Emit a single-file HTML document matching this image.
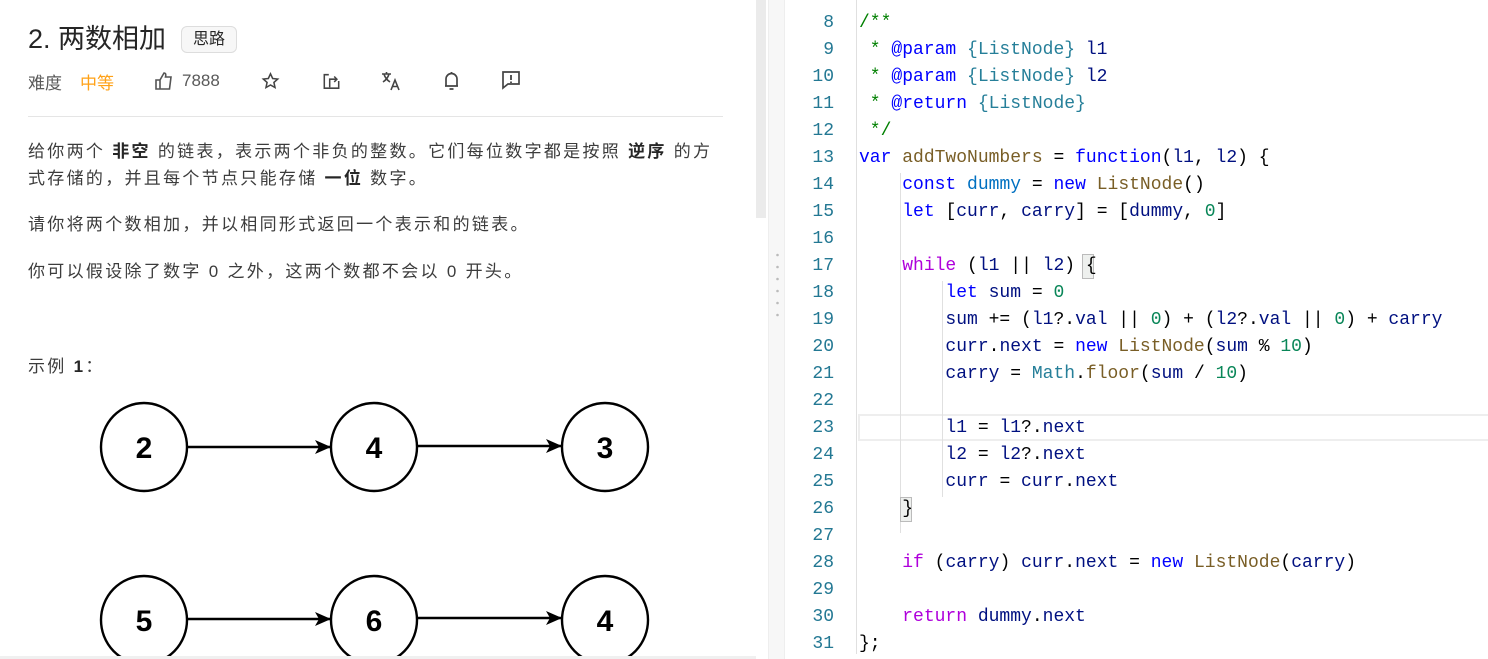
<!DOCTYPE html>
<html><head><meta charset="utf-8"><style>
*{margin:0;padding:0;box-sizing:border-box}
body{width:1488px;height:659px;overflow:hidden;background:#fff;position:relative;font-family:"Liberation Sans","Noto Sans CJK SC",sans-serif;color:#262626}
.abs{position:absolute}
.p{position:absolute;left:28px;font-size:17px;letter-spacing:2.3px;color:#3c3c3c;white-space:nowrap;line-height:27px}
.p b{color:#262626}
.code{position:absolute;left:859px;font-family:"Liberation Mono",monospace;font-size:18px;line-height:27px;white-space:pre;color:#001080}
.ln{position:absolute;right:654px;font-family:"Liberation Mono",monospace;font-size:18px;line-height:27px;color:#237893;text-align:right}
.k{color:#0000ff}.c{color:#af00db}.f{color:#795e26}.n{color:#098658}.cm{color:#008000}.t{color:#267f99}.o{color:#000}
</style></head><body>
<div class="abs" style="left:28px;top:17px;font-size:27px;color:#262626;white-space:nowrap">2. 两数相加</div>
<div class="abs" style="left:181px;top:26px;width:56px;height:27px;border:1px solid #ddd;border-radius:6px;background:#f7f7f7;font-size:16px;line-height:25px;text-align:center;color:#262626">思路</div>
<div class="abs" style="left:28px;top:69px;font-size:17px;color:#595959">难度</div>
<div class="abs" style="left:80px;top:69px;font-size:17px;color:#ffa116">中等</div>
<svg class="abs" style="left:154px;top:71px" width="20" height="20" viewBox="0 0 20 20" fill="none" stroke="#555" stroke-width="1.6"><path d="M2 9h4v9H2zM6 9l4-7c2 0 2 2 1.5 4H17l-1.5 12H6"/></svg>
<div class="abs" style="left:182px;top:71px;font-size:17px;color:#595959">7888</div>
<svg class="abs" style="left:261px;top:72px" width="19" height="18" viewBox="0 0 20 20" fill="none" stroke="#444" stroke-width="1.7"><path d="M10 2l2.4 5.2 5.6.6-4.2 3.8 1.2 5.6L10 14.4 5 17.2l1.2-5.6L2 7.8l5.6-.6z"/></svg>
<svg class="abs" style="left:322px;top:72px" width="19" height="18" viewBox="0 0 20 20" fill="none" stroke="#444" stroke-width="1.7"><path d="M7 3H2v15h16v-8M8 17V8h8M13 5l3 3-3 3"/></svg>
<svg class="abs" style="left:381px;top:71px" width="20" height="20" viewBox="0 0 20 20" fill="none" stroke="#444" stroke-width="1.6"><path d="M1 3h9M5.5 1v2M3 3c1 4 3 6 6 8M8 3c-1 4-3 6-6 8M10 19l4-10 4 10M11.5 15.5h5"/></svg>
<svg class="abs" style="left:443px;top:71px" width="17" height="20" viewBox="0 0 17 20" fill="none" stroke="#444" stroke-width="1.7"><path d="M3 15V8a5.5 5.5 0 0111 0v7H2h13M8.5 1v1.5M6.5 18h4"/></svg>
<svg class="abs" style="left:502px;top:71px" width="18" height="19" viewBox="0 0 18 19" fill="none" stroke="#444" stroke-width="1.7"><path d="M1 1h16v12H6l-5 4z"/><path d="M9 4v5M9 10.5v1.5" stroke-width="1.8"/></svg>
<div class="abs" style="left:28px;top:116px;width:695px;height:1px;background:#e5e5e5"></div>
<div class="p" style="top:138px">给你两个 <b>非空</b> 的链表，表示两个非负的整数。它们每位数字都是按照 <b>逆序</b> 的方</div>
<div class="p" style="top:165px">式存储的，并且每个节点只能存储 <b>一位</b> 数字。</div>
<div class="p" style="top:211px">请你将两个数相加，并以相同形式返回一个表示和的链表。</div>
<div class="p" style="top:258px">你可以假设除了数字 0 之外，这两个数都不会以 0 开头。</div>
<div class="p" style="top:353px">示例 <b>1</b>：</div>
<svg class="abs" style="left:0;top:395px" width="700" height="264" viewBox="0 395 700 264">
<defs><marker id="a" markerWidth="16" markerHeight="16" refX="15" refY="8" orient="auto" markerUnits="userSpaceOnUse"><path d="M0 1L16 8L0 15L4 8z" fill="#000"/></marker></defs>
<g fill="none" stroke="#000" stroke-width="2.4">
<ellipse cx="144" cy="447" rx="43" ry="44"/><ellipse cx="374" cy="447" rx="43" ry="44"/><ellipse cx="605" cy="447" rx="43" ry="44"/>
<ellipse cx="144" cy="620" rx="43" ry="44"/><ellipse cx="374" cy="620" rx="43" ry="44"/><ellipse cx="605" cy="620" rx="43" ry="44"/>
<path d="M187 447H330" marker-end="url(#a)"/><path d="M417 446H561" marker-end="url(#a)"/><path d="M187 619H330" marker-end="url(#a)"/><path d="M417 618H561" marker-end="url(#a)"/>
</g>
<g font-family="Liberation Sans,sans-serif" font-weight="bold" font-size="30" text-anchor="middle">
<text x="144" y="458">2</text><text x="374" y="458">4</text><text x="605" y="458">3</text>
<text x="144" y="631">5</text><text x="374" y="631">6</text><text x="605" y="631">4</text>
</g></svg>
<div class="abs" style="left:0;top:656px;width:756px;height:3px;background:#f0f0f0"></div>
<div class="abs" style="left:756px;top:0;width:10px;height:218px;background:#ebebeb"></div>
<div class="abs" style="left:768px;top:0;width:17px;height:659px;background:#f7f7f7;border-left:1px solid #eee;border-right:1px solid #eee"></div>
<svg class="abs" style="left:775px;top:250px" width="5" height="70"><g fill="#bbb"><circle cx="2.5" cy="5" r="1.3"/><circle cx="2.5" cy="17" r="1.3"/><circle cx="2.5" cy="29" r="1.3"/><circle cx="2.5" cy="41" r="1.3"/><circle cx="2.5" cy="53" r="1.3"/><circle cx="2.5" cy="65" r="1.3"/></g></svg>
<div class="abs" style="left:858px;top:414px;width:630px;height:27px;border:2px solid #eee;border-right:none"></div>
<div class="abs" style="left:856px;top:0;width:1px;height:654px;background:#e0e0e0"></div>
<div class="abs" style="left:900px;top:173px;width:1px;height:360px;background:#e0e0e0"></div>
<div class="abs" style="left:942px;top:281px;width:1px;height:216px;background:#e0e0e0"></div>
<div class="abs" style="left:900px;top:497px;width:12px;height:25px;background:#eef0ee;border:1px solid #bbb"></div>
<div class="abs" style="left:1082px;top:254px;width:12px;height:25px;background:#eef0ee;border:1px solid #bbb"></div>
<div class="ln" style="top:-17px">7<br>8<br>9<br>10<br>11<br>12<br>13<br>14<br>15<br>16<br>17<br>18<br>19<br>20<br>21<br>22<br>23<br>24<br>25<br>26<br>27<br>28<br>29<br>30<br>31</div>
<div class="code" style="top:-17px"><span class="cm"> */
/**
 * <span class="k">@param</span> <span class="t">{ListNode}</span> <span style="color:#001080">l1</span>
 * <span class="k">@param</span> <span class="t">{ListNode}</span> <span style="color:#001080">l2</span>
 * <span class="k">@return</span> <span class="t">{ListNode}</span>
 */</span>
<span class="k">var</span> <span class="f">addTwoNumbers</span> <span class="o">=</span> <span class="k">function</span><span class="o">(</span>l1<span class="o">,</span> l2<span class="o">) {</span>
    <span class="k">const</span> <span style="color:#0070c1">dummy</span> <span class="o">=</span> <span class="k">new</span> <span class="f">ListNode</span><span class="o">()</span>
    <span class="k">let</span> <span class="o">[</span>curr<span class="o">,</span> carry<span class="o">] = [</span>dummy<span class="o">,</span> <span class="n">0</span><span class="o">]</span>

    <span class="c">while</span> <span class="o">(</span>l1 <span class="o">||</span> l2<span class="o">) {</span>
        <span class="k">let</span> sum <span class="o">=</span> <span class="n">0</span>
        sum <span class="o">+=</span> <span class="o">(</span>l1<span class="o">?.</span>val <span class="o">||</span> <span class="n">0</span><span class="o">) + (</span>l2<span class="o">?.</span>val <span class="o">||</span> <span class="n">0</span><span class="o">) +</span> carry
        curr<span class="o">.</span>next <span class="o">=</span> <span class="k">new</span> <span class="f">ListNode</span><span class="o">(</span>sum <span class="o">%</span> <span class="n">10</span><span class="o">)</span>
        carry <span class="o">=</span> <span class="t">Math</span><span class="o">.</span><span class="f">floor</span><span class="o">(</span>sum <span class="o">/</span> <span class="n">10</span><span class="o">)</span>

        l1 <span class="o">=</span> l1<span class="o">?.</span>next
        l2 <span class="o">=</span> l2<span class="o">?.</span>next
        curr <span class="o">=</span> curr<span class="o">.</span>next
    <span class="o">}</span>

    <span class="c">if</span> <span class="o">(</span>carry<span class="o">)</span> curr<span class="o">.</span>next <span class="o">=</span> <span class="k">new</span> <span class="f">ListNode</span><span class="o">(</span>carry<span class="o">)</span>

    <span class="c">return</span> dummy<span class="o">.</span>next
<span class="o">};</span></div>
</body></html>
